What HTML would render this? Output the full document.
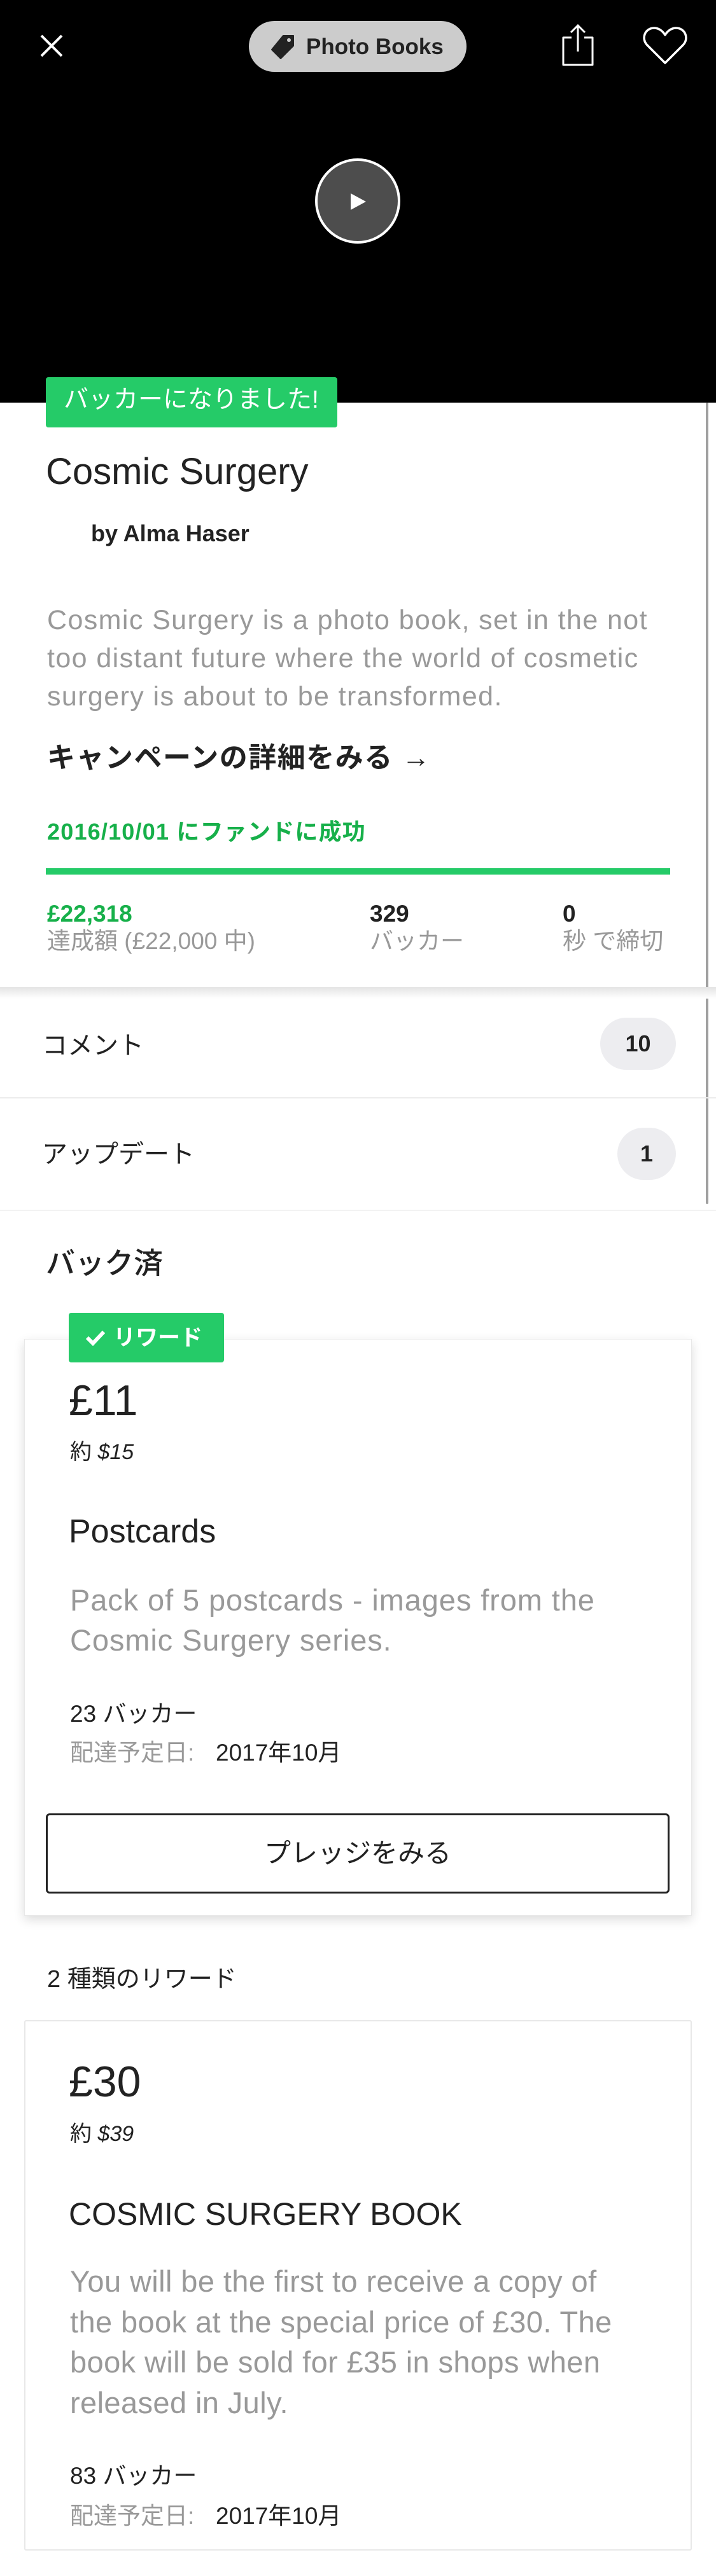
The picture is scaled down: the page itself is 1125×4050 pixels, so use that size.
<!DOCTYPE html>
<html><head><meta charset="utf-8">
<style>
*{margin:0;padding:0;box-sizing:border-box}
html,body{width:1125px;height:4050px;background:#fff;overflow:hidden}
body{position:relative;font-family:"Liberation Sans","Noto Sans CJK JP",sans-serif;color:#222}
.a{position:absolute;white-space:nowrap;line-height:1}
.g{color:#999}
.b{font-weight:bold}
</style></head><body>
<div class="a" style="left:0;top:0;width:1125px;height:633px;background:#000"></div>
<svg class="a" style="left:62px;top:53px" width="38" height="38" viewBox="0 0 38 38"><path d="M3 3L35 35M35 3L3 35" stroke="#fff" stroke-width="4"/></svg>
<div class="a" style="left:391px;top:33px;width:342px;height:80px;border-radius:40px;background:#ccc"></div>
<svg class="a" style="left:425px;top:54px" width="40" height="40" viewBox="0 0 40 40"><path d="M20 2 L36 2 L36 18 L16 38 L2 24 Z" fill="#222" stroke="#222" stroke-width="2" stroke-linejoin="round"/><circle cx="29" cy="9" r="3" fill="#ccc"/></svg>
<div class="a b" style="left:481px;top:56px;font-size:35px;color:#222">Photo Books</div>
<svg class="a" style="left:880px;top:37px" width="56" height="68" viewBox="0 0 56 68"><path d="M18 22H5V65H51V22H38" fill="none" stroke="#fff" stroke-width="3" stroke-linejoin="round"/><path d="M28 3V44M17 14L28 3L39 14" fill="none" stroke="#fff" stroke-width="3"/></svg>
<svg class="a" style="left:1009px;top:41px" width="72" height="62" viewBox="0 0 72 62"><path d="M36 58 L8 30 C-2 20 4 3 19 3 C27 3 33 9 36 14 C39 9 45 3 53 3 C68 3 74 20 64 30 Z" fill="none" stroke="#fff" stroke-width="3.5" stroke-linejoin="round"/></svg>
<div class="a" style="left:495px;top:249px;width:134px;height:134px;border-radius:50%;background:#4d4d4d;border:4px solid #fff"></div>
<svg class="a" style="left:549px;top:302px" width="28" height="30" viewBox="0 0 28 30"><path d="M2 2L26 15L2 28Z" fill="#fff"/></svg>
<div class="a" style="left:1109px;top:633px;width:4px;height:1260px;background:#a0a0a0;border-radius:2px"></div>
<div class="a" style="left:72px;top:593px;width:458px;height:79px;background:#25cb68;border-radius:4px"></div>
<div class="a" style="left:100px;top:609px;font-size:39px;color:#fff">バッカーになりました!</div>
<div class="a" style="left:72px;top:713px;font-size:58px">Cosmic Surgery</div>
<div class="a b" style="left:143px;top:821px;font-size:36px">by Alma Haser</div>
<div class="a g" style="left:74px;top:945px;font-size:43px;line-height:60px;letter-spacing:1.4px">Cosmic Surgery is a photo book, set in the not<br>too distant future where the world of cosmetic<br>surgery is about to be transformed.</div>
<div class="a b" style="left:74px;top:1170px;font-size:44px;letter-spacing:1.5px">キャンペーンの詳細をみる →</div>
<div class="a b" style="left:74px;top:1290px;font-size:36px;color:#17b04a;letter-spacing:1.2px">2016/10/01 にファンドに成功</div>
<div class="a" style="left:72px;top:1365px;width:981px;height:10px;background:#25cb68"></div>
<div class="a b" style="left:74px;top:1418px;font-size:37px;color:#17b04a">£22,318</div>
<div class="a b" style="left:581px;top:1418px;font-size:37px">329</div>
<div class="a b" style="left:884px;top:1418px;font-size:37px">0</div>
<div class="a g" style="left:74px;top:1461px;font-size:37px">達成額 (£22,000 中)</div>
<div class="a g" style="left:581px;top:1461px;font-size:37px">バッカー</div>
<div class="a g" style="left:884px;top:1461px;font-size:37px">秒 で締切</div>
<div class="a" style="left:0;top:1552px;width:1125px;height:18px;background:linear-gradient(#e4e4e4,#fff)"></div>
<div class="a" style="left:66px;top:1624px;font-size:40px">コメント</div>
<div class="a b" style="left:943px;top:1600px;width:119px;height:82px;border-radius:41px;background:#ededf0;font-size:36px;line-height:82px;text-align:center">10</div>
<div class="a" style="left:0;top:1725px;width:1125px;height:2px;background:#ececec"></div>
<div class="a" style="left:66px;top:1795px;font-size:40px">アップデート</div>
<div class="a b" style="left:970px;top:1773px;width:92px;height:82px;border-radius:41px;background:#ededf0;font-size:36px;line-height:82px;text-align:center">1</div>
<div class="a" style="left:0;top:1902px;width:1125px;height:2px;background:#f2f2f2"></div>
<div class="a" style="left:72px;top:1963px;font-size:46px;font-weight:500">バック済</div>
<div class="a" style="left:38px;top:2105px;width:1049px;height:907px;background:#fff;border:1px solid #e8e8e8;box-shadow:0 6px 16px rgba(0,0,0,.14)"></div>
<div class="a" style="left:108px;top:2064px;width:244px;height:78px;background:#25cb68;border-radius:4px"></div>
<svg class="a" style="left:134px;top:2090px" width="32" height="26" viewBox="0 0 32 26"><path d="M3 13L12 22L29 4" fill="none" stroke="#fff" stroke-width="6"/></svg>
<div class="a b" style="left:178px;top:2086px;font-size:35px;color:#fff">リワード</div>
<div class="a" style="left:108px;top:2168px;font-size:68px">£11</div>
<div class="a" style="left:110px;top:2266px;font-size:34px">約 <i>$15</i></div>
<div class="a" style="left:108px;top:2382px;font-size:52px">Postcards</div>
<div class="a g" style="left:110px;top:2484px;font-size:47px;line-height:63px;letter-spacing:0.9px">Pack of 5 postcards - images from the<br>Cosmic Surgery series.</div>
<div class="a" style="left:110px;top:2676px;font-size:37px">23 バッカー</div>
<div class="a g" style="left:110px;top:2737px;font-size:37px">配達予定日:</div>
<div class="a" style="left:339px;top:2737px;font-size:37px">2017年10月</div>
<div class="a" style="left:72px;top:2851px;width:980px;height:126px;border:3px solid #222;border-radius:6px;font-size:42px;line-height:120px;text-align:center">プレッジをみる</div>
<div class="a" style="left:74px;top:3093px;font-size:38px">2 種類のリワード</div>
<div class="a" style="left:38px;top:3176px;width:1049px;height:834px;background:#fff;border:2px solid #e8e8e8;border-radius:3px"></div>
<div class="a" style="left:108px;top:3239px;font-size:68px">£30</div>
<div class="a" style="left:110px;top:3338px;font-size:34px">約 <i>$39</i></div>
<div class="a" style="left:108px;top:3456px;font-size:50px">COSMIC SURGERY BOOK</div>
<div class="a g" style="left:110px;top:3555px;font-size:47px;line-height:63.7px;letter-spacing:0.4px">You will be the first to receive a copy of<br>the book at the special price of £30. The<br>book will be sold for £35 in shops when<br>released in July.</div>
<div class="a" style="left:110px;top:3874px;font-size:37px">83 バッカー</div>
<div class="a g" style="left:110px;top:3937px;font-size:37px">配達予定日:</div>
<div class="a" style="left:339px;top:3937px;font-size:37px">2017年10月</div>
</body></html>
